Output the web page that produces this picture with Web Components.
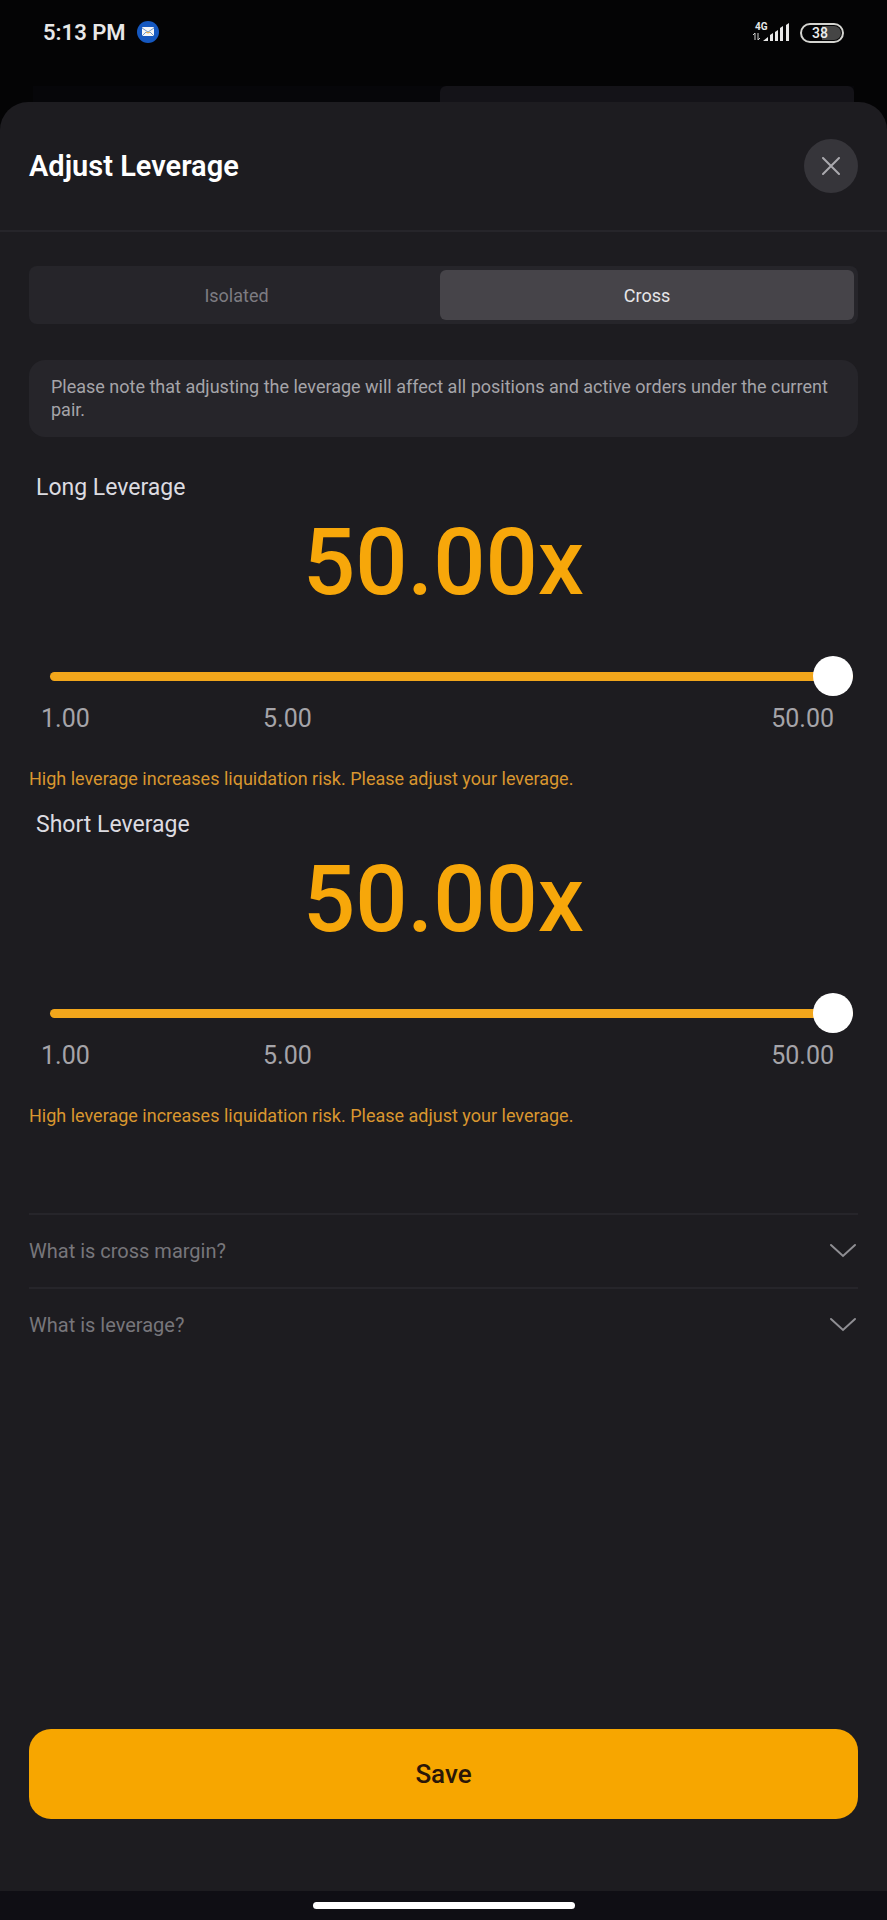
<!DOCTYPE html>
<html lang="en">
<head>
<meta charset="utf-8">
<meta name="viewport" content="width=device-width, initial-scale=1">
<title>Adjust Leverage</title>
<style>
  html, body{
    margin:0;
    min-height:100vh;
    background-color:#040405;
  }
  body{
    display:flex;
    flex-direction:column;
    font-family:Roboto, "Noto Sans", sans-serif;
  }
  leverage-sheet{
    flex:1;
  }
</style>
</head>
<body>
  <status-bar></status-bar>
  <page-peek></page-peek>
  <leverage-sheet>
    <span slot="title">Adjust Leverage</span>
    <margin-tabs></margin-tabs>
    <info-note>Please note that adjusting the leverage will affect all positions and active orders under the current pair.</info-note>
    <div class="sliders">
      <leverage-slider label="Long Leverage" value="50">High leverage increases liquidation risk. Please adjust your leverage.</leverage-slider>
      <leverage-slider label="Short Leverage" value="50">High leverage increases liquidation risk. Please adjust your leverage.</leverage-slider>
    </div>
    <faq-list slot="footer">
      <faq-item>What is cross margin?</faq-item>
      <faq-item>What is leverage?</faq-item>
    </faq-list>
    <save-button slot="action">Save</save-button>
  </leverage-sheet>
  <home-indicator></home-indicator>

<script>
(function(doc) {
  'use strict';

  function attach(el, html) {
    const template = doc.createElement('template');
    template.innerHTML = html;
    el.attachShadow({ mode: 'open' });
    el.shadowRoot.appendChild(template.content.cloneNode(true));
  }

  class StatusBar extends HTMLElement {
    constructor() {
      super();
      attach(this, `
        <style>
        :host{
          display:flex;
          justify-content:space-between;
          align-items:center;
          height:66px;
          padding:0 42px 0 43px;
          color:#e8e8e8;
        }
        div{
          display:flex;
          align-items:center;
          gap:10px;
        }
        .time{
          font-size:22px;
          line-height:28px;
          font-weight:600;
        }
        svg{
          display:block;
        }
        .status{
          gap:8px;
        }
        </style>
        <div>
          <span class="time">5:13 PM</span>
          <svg width="24" height="24" viewBox="0 0 24 24" aria-hidden="true">
            <circle cx="12" cy="11" r="11" fill="#1558c0"/>
            <rect x="6" y="6" width="12" height="9" rx="1" fill="#f4f6f8"/>
            <path d="M6 7l6 4 6-4M6 15l4-4M18 15l-4-4" fill="none" stroke="#6f97c9" stroke-width="1"/>
            <path d="M10 11l2 1 2-1" fill="none" stroke="#e0a53c" stroke-width="1"/>
          </svg>
        </div>
        <div class="status">
          <svg width="40" height="24" viewBox="0 0 40 24" aria-label="4G signal">
            <text x="4" y="9" font-size="10" font-weight="700" fill="#e8e8e8">4G</text>
            <path d="M4 19v-7l-2 2M7 12v7l2-2" fill="none" stroke="#d0d0d0" stroke-width="1"/>
            <path d="M12 20l5-4v4zM19 14l3-2v8h-3zM24 11l3-2v11h-3zM29 7l3-2v15h-3zM35 4l3-2v18h-3z" fill="#e8e8e8"/>
          </svg>
          <svg width="46" height="22" viewBox="0 0 46 22" aria-label="Battery 38 percent">
            <path d="M23 4h12a7 7 0 0 1 0 14H23z" fill="#454545"/>
            <rect x="2" y="2" width="42" height="18" rx="9" fill="none" stroke="#d4d4d0" stroke-width="2"/>
            <text x="21" y="16" font-size="14" font-weight="500" text-anchor="middle" fill="#ededed">38</text>
          </svg>
        </div>
      `);
    }
  }

  // the part of the dimmed page that still shows above the sheet
  class PagePeek extends HTMLElement {
    constructor() {
      super();
      attach(this, `
        <style>
        :host{
          display:grid;
          grid-template-columns:59fr 60fr;
          height:16px;
          margin:20px 33px 0;
          background-color:#060609;
        }
        span{
          grid-column:2;
          border-radius:6px 6px 0 0;
          background-color:#141318;
        }
        </style>
        <span></span>
      `);
    }
  }

  class LeverageSheet extends HTMLElement {
    constructor() {
      super();
      attach(this, `
        <style>
        :host{
          display:flex;
          flex-direction:column;
          border-radius:28px 28px 0 0;
          background-color:#1d1c20;
        }
        header{
          display:flex;
          align-items:center;
          justify-content:space-between;
          padding:36px 29px;
          border-bottom:2px solid #26252a;
        }
        h1{
          margin:0;
          font-size:29px;
          line-height:56px;
          font-weight:600;
          color:#fff;
        }
        .close{
          width:54px;
          height:54px;
          padding:0;
          border:none;
          border-radius:50%;
          background-color:#36353a;
          display:grid;
          place-items:center;
          cursor:pointer;
        }
        main{
          flex:1;
          display:flex;
          flex-direction:column;
          padding:34px 29px 72px;
        }
        .action{
          margin-top:auto;
        }
        ::slotted(.sliders){
          margin-top:36px;
        }
        </style>
        <header>
          <h1><slot name="title"></slot></h1>
          <button class="close" type="button" aria-label="Close">
            <svg width="18" height="18" viewBox="0 0 18 18" fill="none" stroke="#aaa9ae" stroke-width="2" stroke-linecap="round"><path d="M1 1l16 16M17 1L1 17"/></svg>
          </button>
        </header>
        <main>
          <slot></slot>
          <slot name="footer"></slot>
          <div class="action"><slot name="action"></slot></div>
        </main>
      `);
    }
  }

  class MarginTabs extends HTMLElement {
    constructor() {
      super();
      attach(this, `
        <style>
        :host{
          display:grid;
          grid-template-columns:59fr 60fr;
          padding:4px;
          border-radius:8px;
          background-color:#26252a;
        }
        button{
          height:50px;
          padding:0;
          border:none;
          border-radius:6px;
          background:none;
          color:#7d7c82;
          font-family:inherit;
          font-size:18px;
          cursor:pointer;
        }
        button[aria-pressed="true"]{
          background-color:#464449;
          color:#e6e6e8;
        }
        </style>
        <button type="button" aria-pressed="false">Isolated</button>
        <button type="button" aria-pressed="true">Cross</button>
      `);
      this.buttons = this.shadowRoot.querySelectorAll('button');
      this.shadowRoot.addEventListener('click', e => this.select(e.target));
    }

    select(target) {
      if (target.localName !== 'button') return;
      this.buttons.forEach(b => b.setAttribute('aria-pressed', b === target));
    }
  }

  class InfoNote extends HTMLElement {
    constructor() {
      super();
      attach(this, `
        <style>
        :host{
          display:block;
          margin-top:36px;
          padding:15px 22px 16px;
          border-radius:16px;
          background-color:#26252a;
          color:#a5a4a9;
          font-size:18px;
          line-height:23px;
        }
        </style>
        <slot></slot>
      `);
    }
  }

  class LeverageSlider extends HTMLElement {
    constructor() {
      super();
      attach(this, `
        <style>
        :host{
          display:block;
        }
        label{
          display:block;
          padding-left:7px;
          font-size:23px;
          line-height:30px;
          color:#dcdbe0;
        }
        output{
          display:block;
          margin-top:4px;
          font-size:92px;
          line-height:112px;
          font-weight:500;
          text-align:center;
          color:#f7a70a;
        }
        .slider{
          margin:37px 5px 0 21px;
        }
        input{
          -webkit-appearance:none;
          appearance:none;
          display:block;
          width:100%;
          height:40px;
          margin:0;
          background:none;
          cursor:pointer;
        }
        input::-webkit-slider-runnable-track{
          height:9px;
          border-radius:5px;
          background:linear-gradient(to right, #f2a61b var(--fill), #36353a var(--fill));
        }
        input::-webkit-slider-thumb{
          -webkit-appearance:none;
          width:40px;
          height:40px;
          margin-top:-16px;
          border-radius:50%;
          background-color:#fff;
        }
        .marks{
          display:grid;
          grid-template-columns:28% 1fr auto;
          padding:8px 24px 0 12px;
          font-size:25px;
          line-height:30px;
          color:#a5a4a9;
        }
        p{
          margin:33px 0 19px;
          font-size:18px;
          line-height:24px;
          color:#d9962f;
        }
        </style>
        <label for="range"></label>
        <output for="range"></output>
        <div class="slider"><input id="range" type="range" min="1" max="50" step="1"></div>
        <div class="marks"><span>1.00</span><span>5.00</span><span>50.00</span></div>
        <p><slot></slot></p>
      `);
      this.input = this.shadowRoot.querySelector('input');
      this.input.addEventListener('input', () => this.update());
    }

    connectedCallback() {
      this.shadowRoot.querySelector('label').textContent = this.getAttribute('label');
      this.input.value = this.getAttribute('value');
      this.update();
    }

    update() {
      const value = Number(this.input.value);
      this.input.style.setProperty('--fill', (value - 1) / 49 * 100 + '%');
      this.shadowRoot.querySelector('output').textContent = value.toFixed(2) + 'x';
    }
  }

  class FaqList extends HTMLElement {
    constructor() {
      super();
      attach(this, `
        <style>
        :host{
          display:block;
          margin-top:66px;
        }
        </style>
        <slot></slot>
      `);
    }
  }

  class FaqItem extends HTMLElement {
    constructor() {
      super();
      attach(this, `
        <style>
        :host{
          display:block;
          border-top:2px solid #26252a;
        }
        button{
          display:flex;
          justify-content:space-between;
          align-items:center;
          width:100%;
          height:72px;
          padding:0;
          border:none;
          background:none;
          color:#77767b;
          font-family:inherit;
          font-size:20px;
          cursor:pointer;
        }
        </style>
        <button type="button">
          <slot></slot>
          <svg width="30" height="16" viewBox="0 0 30 16" fill="none" stroke="#8f8e93" stroke-width="2" stroke-linecap="round"><path d="M3 2l12 11 12-11"/></svg>
        </button>
      `);
    }
  }

  class SaveButton extends HTMLElement {
    constructor() {
      super();
      attach(this, `
        <style>
        :host{
          display:block;
        }
        button{
          display:block;
          width:100%;
          height:90px;
          border:none;
          border-radius:22px;
          background-color:#f7a600;
          color:#2a1608;
          font-family:inherit;
          font-size:26px;
          font-weight:500;
          cursor:pointer;
        }
        </style>
        <button type="button"><slot></slot></button>
      `);
    }
  }

  class HomeIndicator extends HTMLElement {
    constructor() {
      super();
      attach(this, `
        <style>
        :host{
          display:flex;
          justify-content:center;
          padding:11px 0;
          background-color:#0f0e14;
        }
        span{
          width:262px;
          height:7px;
          border-radius:4px;
          background-color:#fff;
        }
        </style>
        <span></span>
      `);
    }
  }

  customElements.define('status-bar', StatusBar);
  customElements.define('page-peek', PagePeek);
  customElements.define('leverage-sheet', LeverageSheet);
  customElements.define('margin-tabs', MarginTabs);
  customElements.define('info-note', InfoNote);
  customElements.define('leverage-slider', LeverageSlider);
  customElements.define('faq-list', FaqList);
  customElements.define('faq-item', FaqItem);
  customElements.define('save-button', SaveButton);
  customElements.define('home-indicator', HomeIndicator);

})(document);
</script>
</body>
</html>
